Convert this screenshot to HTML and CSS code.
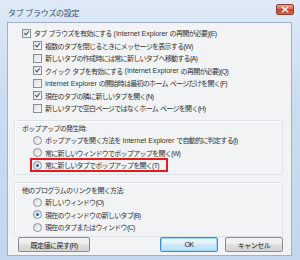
FILE: index.html
```html
<!DOCTYPE html>
<html lang="ja">
<head>
    <meta charset="UTF-8">
    <title>タブ ブラウズの設定</title>
    <link rel="stylesheet" href="styles.css">
</head>
<body>
    <div class="window">
        <div class="titlebar">
            <span class="title">タブ ブラウズの設定</span>
            <span class="close">
                <svg width="8" height="7" viewBox="0 0 8 7"><path d="M1 1 L7 6 M7 1 L1 6" stroke="#fff" stroke-width="1.6"/></svg>
            </span>
        </div>
        <div class="client">
            <div class="options">
                <div class="row"><span class="box checked"></span>タブ<span class="en"> </span>ブラウズを有効にする<span class="en"> (Internet Explorer </span>の再開が必要)(E)</div>
                <div class="sub">
                    <div class="row"><span class="box checked"></span>複数のタブを閉じるときにメッセージを表示する(W)</div>
                    <div class="row"><span class="box"></span>新しいタブの作成時には常に新しいタブへ移動する(A)</div>
                    <div class="row"><span class="box checked"></span>クイック<span class="en"> </span>タブを有効にする<span class="en"> (Internet Explorer </span>の再開が必要)(Q)</div>
                    <div class="row"><span class="box"></span><span class="en">Internet Explorer </span>の開始時は最初のホーム<span class="en"> </span>ページだけを開く(F)</div>
                    <div class="row"><span class="box checked"></span>現在のタブの隣に新しいタブを開く(N)</div>
                    <div class="row"><span class="box"></span>新しいタブで空白ページではなくホーム<span class="en"> </span>ページを開く(H)</div>
                </div>
            </div>

            <div class="group">
                <div class="row">ポップアップの発生時:</div>
                <div class="sub">
                    <div class="row"><span class="radio"></span>ポップアップを開く方法を<span class="en"> Internet Explorer </span>で自動的に判定する(I)</div>
                    <div class="row"><span class="radio"></span>常に新しいウィンドウでポップアップを開く(W)</div>
                    <div class="row"><span class="mark"><span class="radio on"></span>常に新しいタブでポップアップを開く(T)</span></div>
                </div>
            </div>

            <div class="group second">
                <div class="row">他のプログラムのリンクを開く方法:</div>
                <div class="sub">
                    <div class="row"><span class="radio"></span>新しいウィンドウ(O)</div>
                    <div class="row"><span class="radio on"></span>現在のウィンドウの新しいタブ(B)</div>
                    <div class="row"><span class="radio"></span>現在のタブまたはウィンドウ(C)</div>
                </div>
            </div>

            <div class="buttons">
                <button class="btn wide">既定値に戻す(R)</button>
                <span class="spacer"></span>
                <button class="btn default">OK</button>
                <button class="btn">キャンセル</button>
            </div>
        </div>
    </div>
</body>
</html>
```

FILE: styles.css
```css
body {
    margin: 0;
    font-family: "Liberation Sans", "Noto Sans CJK JP", sans-serif;
    font-size: 7px;
    color: #333;
}
.window {
    width: 300px;
    height: 260px;
    box-sizing: border-box;
    display: flex;
    flex-direction: column;
    padding: 0 8px 4px 7px;
    background: linear-gradient(180deg, #dde9f6 0%, #cadcf1 40%, #c3d6ee 100%);
}
.titlebar {
    height: 22px;
    display: flex;
    align-items: center;
    justify-content: space-between;
    flex-shrink: 0;
}
.title {
    font-size: 8px;
    letter-spacing: -0.3px;
    color: #3a5270;
    padding-left: 1px;
    margin-top: 3px;
}
.close {
    width: 16px;
    height: 9px;
    margin-right: -2px;
    border: 1px solid #8e3b32;
    border-radius: 2px;
    background: linear-gradient(180deg, #e8a699 0%, #d6634f 45%, #c23d23 55%, #d86a4c 100%);
    display: flex;
    align-items: center;
    justify-content: center;
    margin-top: -3px;
}
.client {
    flex: 1;
    background: #f2f3f5;
    border: 1px solid #9eb1c8;
    padding: 4px 0 0 0;
    display: flex;
    flex-direction: column;
}
.options {
    padding-left: 14px;
}
.row {
    height: 12.5px;
    display: flex;
    align-items: center;
    white-space: pre;
    letter-spacing: -0.7px;
}
.en {
    letter-spacing: 0;
}
.sub {
    padding-left: 11px;
}
.box {
    width: 7px;
    height: 7px;
    border: 1px solid #8a8f96;
    background: linear-gradient(135deg, #dcdfe3, #fbfbfb);
    margin-right: 3px;
    flex-shrink: 0;
    position: relative;
}
.box.checked::after {
    content: "";
    position: absolute;
    left: 2px;
    top: 0;
    width: 2px;
    height: 4px;
    border: solid #3b5379;
    border-width: 0 1.5px 1.5px 0;
    transform: rotate(40deg);
}
.group {
    margin: 5px 8px 0 6px;
    padding: 1px 0 2px 7px;
    border: 1px solid #dfe3e8;
    border-radius: 2px;
    box-shadow: inset 1px 1px 0 #fff;
}
.group.second {
    margin-top: 7px;
}
.radio {
    width: 7px;
    height: 7px;
    border: 1px solid #8a8f96;
    border-radius: 50%;
    background: linear-gradient(135deg, #d8dbe0, #fcfcfc);
    margin-right: 3px;
    flex-shrink: 0;
    display: flex;
    align-items: center;
    justify-content: center;
}
.radio.on::after {
    content: "";
    width: 3px;
    height: 3px;
    border-radius: 50%;
    background: #2c66b8;
}
.mark {
    display: flex;
    align-items: center;
    height: 10px;
    padding: 0 7px 0 1px;
    margin-left: -3px;
    border: 2px solid #e31b1b;
}
.buttons {
    margin-top: auto;
    margin-bottom: 3px;
    padding: 0 8px 0 10px;
    display: flex;
    gap: 7px;
}
.spacer {
    flex: 1;
}
.btn {
    width: 58px;
    height: 15px;
    padding: 0;
    font-family: inherit;
    font-size: 7px;
    letter-spacing: -0.5px;
    color: #222;
    border: 1px solid #8b8b8b;
    border-radius: 2px;
    background: linear-gradient(180deg, #f4f4f4 0%, #ebebeb 48%, #dcdcdc 52%, #d4d4d4 100%);
}
.btn.wide {
    width: 72px;
}
.btn.default {
    border-color: #3c8fc8;
    box-shadow: inset 0 0 0 1px #9fd8f5;
    background: linear-gradient(180deg, #eef7fd 0%, #dff0fb 48%, #c9e6f8 52%, #bfe1f6 100%);
}
```
